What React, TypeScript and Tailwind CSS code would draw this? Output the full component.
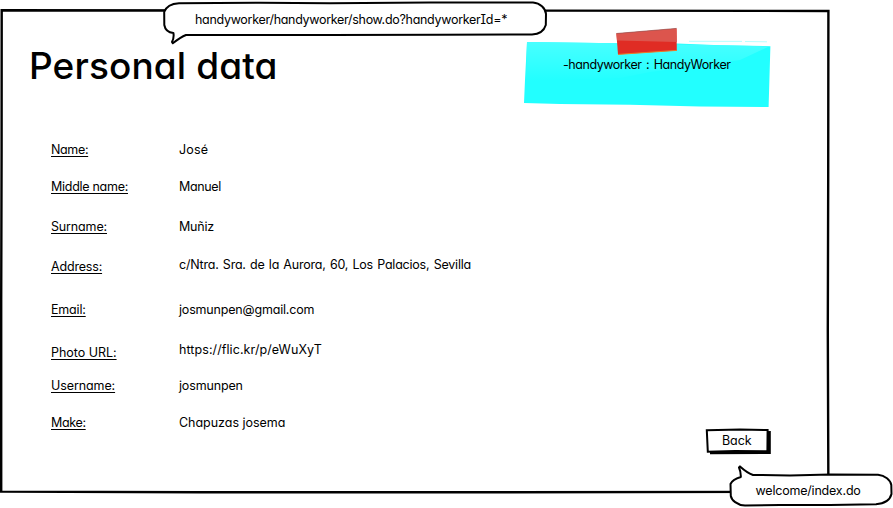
import React from "react";

type Row = { label: string; value: string; labelClass: string; valueClass: string; rowClass: string };

const rows: Row[] = [
  { label: "Name:", value: "José", labelClass: "tracking-[-0.35px]", valueClass: "tracking-[0.15px]", rowClass: "h-[37px]" },
  { label: "Middle name:", value: "Manuel", labelClass: "tracking-[-0.28px]", valueClass: "tracking-[-0.37px]", rowClass: "h-[40px]" },
  { label: "Surname:", value: "Muñiz", labelClass: "tracking-[-0.15px]", valueClass: "tracking-[-0.2px]", rowClass: "h-[38px]" },
  { label: "Address:", value: "c/Ntra. Sra. de la Aurora, 60, Los Palacios, Sevilla", labelClass: "pt-[2px] tracking-[-0.18px]", valueClass: "tracking-[-0.22px] [word-spacing:1px]", rowClass: "h-[45px]" },
  { label: "Email:", value: "josmunpen@gmail.com", labelClass: "tracking-[-0.18px]", valueClass: "tracking-[-0.18px]", rowClass: "h-[40px]" },
  { label: "Photo URL:", value: "https://flic.kr/p/eWuXyT", labelClass: "pt-[3px] tracking-[-0.03px]", valueClass: "tracking-[0.08px]", rowClass: "h-[36px]" },
  { label: "Username:", value: "josmunpen", labelClass: "tracking-[-0.1px]", valueClass: "tracking-[-0.16px]", rowClass: "h-[37px]" },
  { label: "Make:", value: "Chapuzas josema", labelClass: "tracking-[-0.35px]", valueClass: "tracking-[-0.03px]", rowClass: "h-[20px]" },
];

function FrameOutline() {
  return (
    <svg className="absolute left-0 top-0" width="893" height="508" viewBox="0 0 893 508" fill="none" stroke="#000" strokeWidth="2.4">
      <path d="M1.7 10.3 L250 10.5 L546 10.6 L828.4 11 L828.2 180 L827.8 330 L828.4 491.8 L500 492.2 L200 492.3 L1.2 491.6 L1.2 300 L1.6 150 Z" />
    </svg>
  );
}

function UrlBubble() {
  return (
    <div className="absolute left-[160px] top-0 flex h-[46px] w-[390px]">
      <svg className="absolute left-0 top-0" width="390" height="46" viewBox="160 0 390 46" fill="#fff" stroke="#000" strokeWidth="2" strokeLinejoin="round">
        <path d="M179 3.2 L260 2.7 L330 3.3 L430 2.4 L533 2.4 C540 3 545.5 8 546 14 L545.8 25 C544 31 539 34.2 532 34.5 L440 34.8 L330 35 L186 35 C181 37 177 40 172.8 43.3 L172 42 C173.5 39 174 36 173.4 33 C168 32.5 165 29 164.3 25 L164.2 12 C166 7 171 3.6 179 3.2 Z" />
      </svg>
      <span className="relative pl-[35px] pt-[10px] tracking-[-0.3px]">handyworker/handyworker/show.do?handyworkerId=*</span>
    </div>
  );
}

function Note() {
  return (
    <div className="absolute left-[520px] top-[24px] flex h-[86px] w-[254px]">
      <svg className="absolute left-0 top-0" width="254" height="86" viewBox="520 24 254 86">
        <defs>
          <linearGradient id="sheen" x1="0" y1="0" x2="0" y2="1">
            <stop offset="0" stopColor="#48ffff" />
            <stop offset="1" stopColor="#22ffff" />
          </linearGradient>
        </defs>
        <path d="M527 42 L617 43.2 L677 43.6 L720 45.2 L770.4 46.2 L768.6 107 L700 106.6 L630 104.8 L560 104 L524 103 L525 80 Z" fill="#22ffff" />
        <path d="M527 42 L617 43.2 L720 45.2 L769 46.5 L740 60 L650 72 L620 78 L526 81 Z" fill="url(#sheen)" />
        <path d="M689 41.3 L742 41.4 M745 41.5 L767 41.8" stroke="#b8ffff" strokeWidth="1" />
        <path d="M616.4 33.5 L676.5 28.4 L676.8 50.5 L618 54.5 Z" fill="#e02c24" />
        <path d="M616.4 33.5 L676.5 28.4 L676.8 42 L617 40.5 Z" fill="#dc554d" />
        <path d="M618 54.4 L676.8 50.4" stroke="#ee7a24" strokeWidth="1" />
        <path d="M616.4 33.5 L676.5 28.4" stroke="#965551" strokeWidth=".7" />
      </svg>
      <span className="relative pl-[43px] pt-[31px] tracking-[-0.45px] [word-spacing:1.5px]">-handyworker : HandyWorker</span>
    </div>
  );
}

function BackButton() {
  return (
    <button className="relative ml-[705px] flex h-[27px] w-[67px]">
      <svg className="absolute left-0 top-0" width="67" height="27" viewBox="705 428 67 27">
        <path d="M710 432 L770.8 431 L770.8 454 L710 454.2 Z" fill="#000" />
        <path d="M706.8 430.2 L740 429.6 L767.6 430 L767.4 451.2 L735 451 L707.8 451.8 Z" fill="#fff" stroke="#000" strokeWidth="2" />
      </svg>
      <span className="relative pl-[17px] pt-[3px] tracking-[-0.1px]">Back</span>
    </button>
  );
}

function IndexBubble() {
  return (
    <div className="absolute left-[727px] top-[463px] flex h-[45px] w-[166px]">
      <svg className="absolute left-0 top-0" width="166" height="45" viewBox="727 463 166 45" fill="#fff" stroke="#000" strokeWidth="2" strokeLinejoin="round">
        <path d="M740 466.4 C744 470 748 473 753 475 L790 475.4 L830 474.4 L878 474.8 C885 475.5 890.5 480 891.3 485 L891.5 494 C890 500 885 503.6 876 504.2 L830 505 L780 505 L745 505.6 C737 505 731.5 500 730.8 496 L730.5 484 C732 480.5 736 478.5 740.8 477 C741 473.5 740.5 471 739 467.5 Z" />
      </svg>
      <span className="relative pl-[28.5px] pt-[18px] tracking-[-0.2px]">welcome/index.do</span>
    </div>
  );
}

export default function App() {
  return (
    <main className="relative h-[508px] w-[893px] overflow-hidden bg-white font-['Inter','Noto_Sans',sans-serif] text-[12.5px] leading-[20px] font-normal whitespace-nowrap text-black [font-feature-settings:'cv11','cv08','calt'_0]">
      <FrameOutline />
      <section className="relative flex flex-col">
        <h1 className="h-[140px] pl-[29px] pt-[41px] text-[37px] leading-[50px] font-medium tracking-[0.12px]">Personal data</h1>
        <dl className="flex flex-col pl-[51px]">
          {rows.map((r) => (
            <div key={r.label} className={"flex items-start " + r.rowClass}>
              <dt className={"w-[128px] underline decoration-1 underline-offset-2 [text-decoration-skip-ink:none] " + r.labelClass}>{r.label}</dt>
              <dd className={r.valueClass}>{r.value}</dd>
            </div>
          ))}
        </dl>
        <div className="-mt-[5px] flex">
          <BackButton />
        </div>
      </section>
      <UrlBubble />
      <Note />
      <IndexBubble />
    </main>
  );
}
